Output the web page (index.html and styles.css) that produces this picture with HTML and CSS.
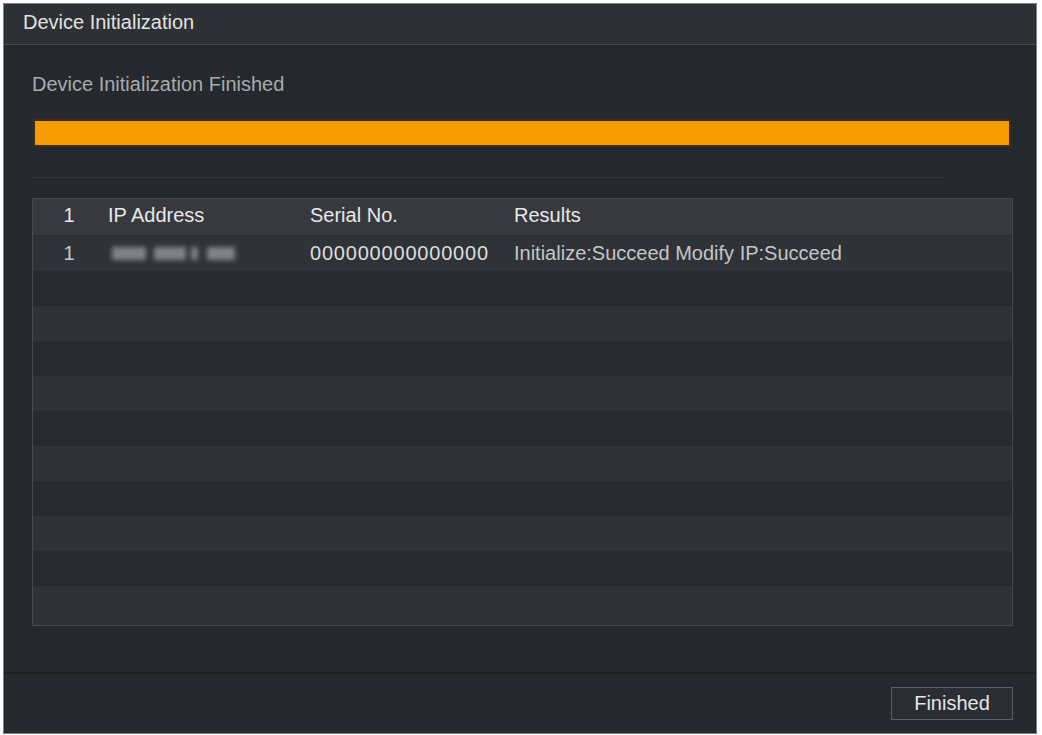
FILE: index.html
```html
<!DOCTYPE html>
<html>
<head>
<meta charset="utf-8">
<link rel="stylesheet" href="styles.css">
</head>
<body>
<div class="window">
  <div class="titlebar">Device Initialization</div>
  <div class="content">
    <div class="status">Device Initialization Finished</div>
    <div class="progress"><div class="progress-fill"></div></div>
    <div class="divider"></div>
    <div class="table">
      <div class="row head">
        <div class="c-idx">1</div>
        <div class="c-ip">IP Address</div>
        <div class="c-sn">Serial No.</div>
        <div class="c-res">Results</div>
      </div>
      <div class="row odd">
        <div class="c-idx dim">1</div>
        <div class="c-ip"><span class="blur b1"></span><span class="blur b2"></span><span class="blur b3"></span><span class="blur b4"></span></div>
        <div class="c-sn serial">000000000000000</div>
        <div class="c-res dim">Initialize:Succeed Modify IP:Succeed</div>
      </div>
      <div class="row"></div>
      <div class="row odd"></div>
      <div class="row"></div>
      <div class="row odd"></div>
      <div class="row"></div>
      <div class="row odd"></div>
      <div class="row"></div>
      <div class="row odd"></div>
      <div class="row"></div>
      <div class="row odd last"></div>
    </div>
  </div>
  <div class="footer">
    <button class="btn">Finished</button>
  </div>
</div>
</body>
</html>
```
FILE: styles.css
```css
html, body {
  margin: 0;
  padding: 0;
  background: #ffffff;
}
body {
  font-family: "Liberation Sans", Arial, sans-serif;
}
.window {
  box-sizing: border-box;
  width: 1034px;
  height: 731px;
  margin: 3px 0 0 3px;
  border: 1px solid #7d7f83;
  background: #25282d;
  display: flex;
  flex-direction: column;
}
.titlebar {
  height: 40px;
  line-height: 37px;
  padding-left: 19px;
  font-size: 20px;
  color: #e2e2e2;
  background: #2d3035;
  border-bottom: 1px solid #45484d;
}
.content {
  flex: 1;
  padding: 0 23px 0 28px;
  display: flex;
  flex-direction: column;
}
.status {
  margin-top: 28px;
  height: 22px;
  line-height: 22px;
  font-size: 20px;
  color: #a9abae;
}
.progress {
  margin: 24px 2px 0 1px;
  height: 28px;
  box-sizing: border-box;
  border: 2px solid #3b2f1c;
  background: #3b2f1c;
}
.progress-fill {
  height: 100%;
  background: #f69b00;
}
.divider {
  margin-top: 30px;
  width: 914px;
  height: 1px;
  background: #32353a;
}
.table {
  margin-top: 20px;
  border: 1px solid #46494e;
  display: flex;
  flex-direction: column;
}
.row {
  display: flex;
  align-items: center;
  height: 35px;
  font-size: 20px;
  color: #dedede;
  background: #272a2f;
}
.row.odd {
  background: #2f3237;
}
.row.head {
  height: 37px;
  box-sizing: border-box;
  padding-bottom: 4px;
  background: #37393e;
  color: #e8e8e8;
  border-bottom: 1px solid #2a2d31;
}
.row.last {
  height: 39px;
}
.c-idx {
  width: 75px;
  padding-right: 3px;
  box-sizing: border-box;
  text-align: center;
}
.c-ip {
  width: 202px;
  display: flex;
  align-items: center;
}
.c-sn {
  width: 204px;
}
.serial {
  letter-spacing: 0.8px;
}
.c-res {
  flex: 1;
}
.dim {
  color: #c4c6c9;
}
.blur {
  display: inline-block;
  height: 13px;
  background: #a2a6ae;
  filter: blur(2.5px);
  opacity: 0.7;
}
.b1 { width: 34px; margin-left: 4px; }
.b2 { width: 32px; margin-left: 8px; }
.b3 { width: 7px; margin-left: 5px; }
.b4 { width: 28px; margin-left: 9px; }
.footer {
  height: 59px;
  border-top: 2px solid #1d1f23;
  background: #25282d;
  display: flex;
  align-items: center;
  justify-content: flex-end;
  padding-right: 23px;
}
.btn {
  width: 122px;
  height: 33px;
  margin-top: -1px;
  background: #2a2d33;
  border: 1px solid #5c5f65;
  color: #e6e6e6;
  font-family: "Liberation Sans", Arial, sans-serif;
  font-size: 20px;
  padding: 0;
}
```
